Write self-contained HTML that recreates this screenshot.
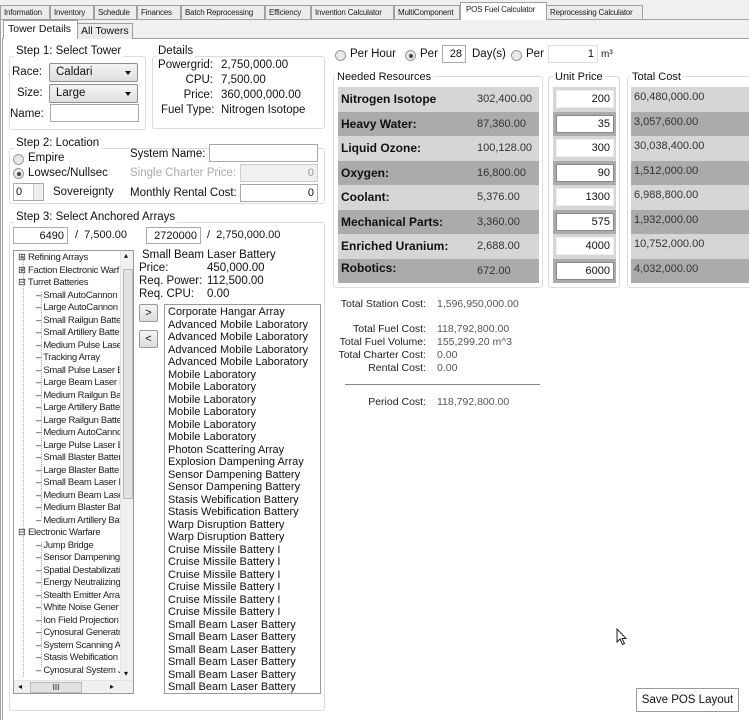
<!DOCTYPE html>
<html><head><meta charset="utf-8"><style>
*{box-sizing:border-box;margin:0;padding:0}
body{width:749px;height:720px;position:relative;overflow:hidden;background:#f0f0f0;font-family:"Liberation Sans",Arial,sans-serif;font-size:11.5px;color:#111}
.a{position:absolute;white-space:nowrap}
.tab{position:absolute;top:5px;height:15px;border:1px solid #a0a0a0;border-bottom:none;background:#ececec;font-size:8px;letter-spacing:-0.2px;line-height:13px;padding-left:3px;color:#222;overflow:hidden;white-space:nowrap}
.grp{position:absolute;border:1px solid #dcdcdc;border-radius:3px}
.gt{position:absolute;background:#fff;padding:0 2px;font-size:11.5px;line-height:12px;white-space:nowrap}
.tb{position:absolute;background:#fff;border:1px solid #a9a9a9;font-size:11px;display:flex;align-items:center;justify-content:flex-end;padding-right:3px}
.combo{position:absolute;border:1px solid #8d8d8d;border-radius:2px;background:linear-gradient(#f4f4f4,#dedede);font-size:11.5px;padding-left:6px;line-height:17px}
.combo:after{content:"";position:absolute;right:6px;top:7px;border:3.5px solid transparent;border-top:4px solid #111}
.rad{position:absolute;width:11px;height:11px;border:1px solid #999;border-radius:50%;background:#e8e8e8}
.rad.on:after{content:"";position:absolute;left:2.5px;top:2.5px;width:4px;height:4px;border-radius:50%;background:#444}
.tree div{height:12.5px;line-height:12.5px;font-size:9.5px;letter-spacing:-0.3px;white-space:nowrap;color:#222}
.list div{height:12.5px;line-height:12.5px;font-size:11px;white-space:nowrap}
.row{position:absolute;height:24.5px}
.rn{position:absolute;left:3px;top:5px;font-size:12px;font-weight:bold;white-space:nowrap}
.rv{position:absolute;left:139px;top:6px;font-size:11px;color:#333;white-space:nowrap}
.L{background:#d6d6d6}.D{background:#ababab}
.sl{position:absolute;width:95px;text-align:right;font-size:10.5px;color:#222;white-space:nowrap}
.sv{position:absolute;left:437px;font-size:10.5px;color:#555;white-space:nowrap}
</style></head><body>
<div class="tab" style="left:0;width:50px">Information</div>
<div class="tab" style="left:50px;width:44px">Inventory</div>
<div class="tab" style="left:94px;width:43px">Schedule</div>
<div class="tab" style="left:137px;width:44px">Finances</div>
<div class="tab" style="left:181px;width:84px">Batch Reprocessing</div>
<div class="tab" style="left:265px;width:46px">Efficiency</div>
<div class="tab" style="left:311px;width:83px">Invention Calculator</div>
<div class="tab" style="left:394px;width:66px">MultiComponent</div>
<div class="tab" style="left:546px;width:97px">Reprocessing Calculator</div>
<div class="a" style="left:0;top:19px;width:749px;height:1px;background:#a0a0a0"></div>
<div class="tab" style="left:460px;top:2px;height:18px;width:87px;background:#fff;padding-left:5px;line-height:14px">POS Fuel Calculator</div>
<div class="a" style="left:0;top:20px;width:749px;height:700px;background:#fff;border-left:1px solid #a0a0a0"></div>
<div class="a" style="left:2px;top:38px;width:747px;height:682px;background:#fff;border-left:1px solid #a0a0a0;border-top:1px solid #a0a0a0"></div>
<div class="a" style="left:2px;top:20px;width:747px;height:18px;background:#f0f0f0"></div>
<div class="a" style="left:77px;top:23px;width:56px;height:16px;border:1px solid #a0a0a0;border-bottom:none;background:#ececec;font-size:10.5px;padding-left:3px;line-height:14px">All Towers</div>
<div class="a" style="left:3px;top:20px;width:75px;height:19px;border:1px solid #a0a0a0;border-bottom:none;background:#fff;font-size:10.5px;padding-left:4px;line-height:17px">Tower Details</div>

<div class="grp" style="left:9px;top:56px;width:137px;height:74px"></div>
<div class="gt" style="left:14px;top:45px">Step 1: Select Tower</div>
<div class="a" style="left:12px;top:66px">Race:</div>
<div class="combo" style="left:49px;top:63px;width:89px;height:19px">Caldari</div>
<div class="a" style="left:17px;top:87px">Size:</div>
<div class="combo" style="left:49px;top:84px;width:89px;height:19px">Large</div>
<div class="a" style="left:10px;top:108px">Name:</div>
<div class="tb" style="left:50px;top:104px;width:89px;height:18px"></div>

<div class="grp" style="left:152px;top:56px;width:173px;height:73px"></div>
<div class="gt" style="left:156px;top:45px">Details</div>
<div class="a" style="left:150px;top:58px;width:63px;text-align:right;line-height:15px">Powergrid:<br>CPU:<br>Price:<br></div>
<div class="a" style="left:161px;top:103px;line-height:15px">Fuel Type:</div>
<div class="a" style="left:221px;top:58px;line-height:15px">2,750,000.00<br>7,500.00<br>360,000,000.00<br>Nitrogen Isotope</div>

<div class="grp" style="left:9px;top:148px;width:316px;height:56px"></div>
<div class="gt" style="left:14px;top:137px">Step 2: Location</div>
<div class="rad" style="left:13px;top:154px"></div><div class="a" style="left:28px;top:152px">Empire</div>
<div class="rad on" style="left:13px;top:168px"></div><div class="a" style="left:28px;top:167px">Lowsec/Nullsec</div>
<div class="tb" style="left:13px;top:183px;width:31px;height:18px;justify-content:flex-start;padding-left:2px">0<span style="position:absolute;right:0;top:0;width:10px;height:16px;background:#eee;border-left:1px solid #ccc"></span></div>
<div class="a" style="left:53px;top:186px">Sovereignty</div>
<div class="a" style="left:130px;top:148px">System Name:</div>
<div class="tb" style="left:209px;top:144px;width:109px;height:18px"></div>
<div class="a" style="left:130px;top:167px;color:#aaa">Single Charter Price:</div>
<div class="tb" style="left:240px;top:164px;width:78px;height:18px;background:#f0f0f0;border-color:#ccc;color:#999">0</div>
<div class="a" style="left:130px;top:187px">Monthly Rental Cost:</div>
<div class="tb" style="left:240px;top:184px;width:78px;height:18px;color:#111">0</div>

<div class="grp" style="left:9px;top:222px;width:316px;height:489px"></div>
<div class="gt" style="left:14px;top:211px">Step 3: Select Anchored Arrays</div>
<div class="tb" style="left:13px;top:227px;width:55px;height:17px">6490</div>
<div class="a" style="left:75px;top:229px;font-size:11px">/&nbsp;&nbsp;7,500.00</div>
<div class="tb" style="left:146px;top:227px;width:55px;height:17px">2720000</div>
<div class="a" style="left:207px;top:229px;font-size:11px">/&nbsp;&nbsp;2,750,000.00</div>

<div class="a" style="left:13px;top:250px;width:121px;height:444px;border:1px solid #999;background:#fff;overflow:hidden">
<div class="a" style="left:9px;top:6px;height:420px;border-left:1px dotted #aaa"></div>
<div class="a" style="left:27px;top:41px;height:225px;border-left:1px dotted #aaa"></div>
<div class="a" style="left:27px;top:291px;height:125px;border-left:1px dotted #aaa"></div>
<div class="tree a" style="left:4px;top:1px">
<div>⊞ Refining Arrays</div><div>⊞ Faction Electronic Warf</div><div>⊟ Turret Batteries</div>
<div style="padding-left:18px">– Small AutoCannon</div><div style="padding-left:18px">– Large AutoCannon</div><div style="padding-left:18px">– Small Railgun Batte</div><div style="padding-left:18px">– Small Artillery Batter</div><div style="padding-left:18px">– Medium Pulse Lase</div><div style="padding-left:18px">– Tracking Array</div><div style="padding-left:18px">– Small Pulse Laser E</div><div style="padding-left:18px">– Large Beam Laser I</div><div style="padding-left:18px">– Medium Railgun Ba</div><div style="padding-left:18px">– Large Artillery Batte</div><div style="padding-left:18px">– Large Railgun Batte</div><div style="padding-left:18px">– Medium AutoCanno</div><div style="padding-left:18px">– Large Pulse Laser E</div><div style="padding-left:18px">– Small Blaster Batter</div><div style="padding-left:18px">– Large Blaster Batte</div><div style="padding-left:18px">– Small Beam Laser E</div><div style="padding-left:18px">– Medium Beam Lase</div><div style="padding-left:18px">– Medium Blaster Bat</div><div style="padding-left:18px">– Medium Artillery Bat</div>
<div>⊟ Electronic Warfare</div>
<div style="padding-left:18px">– Jump Bridge</div><div style="padding-left:18px">– Sensor Dampening</div><div style="padding-left:18px">– Spatial Destabilizati</div><div style="padding-left:18px">– Energy Neutralizing</div><div style="padding-left:18px">– Stealth Emitter Arra</div><div style="padding-left:18px">– White Noise Gener</div><div style="padding-left:18px">– Ion Field Projection</div><div style="padding-left:18px">– Cynosural Generato</div><div style="padding-left:18px">– System Scanning A</div><div style="padding-left:18px">– Stasis Webification</div><div style="padding-left:18px">– Cynosural System J</div>
</div>
<div class="a" style="left:106px;top:0;width:14px;height:429px;background:#f0f0f0;border-left:1px solid #e4e4e4"><div class="a" style="left:2px;top:18px;width:10px;height:230px;background:#e2e2e2;border:1px solid #bbb"></div><div class="a" style="left:3px;top:0;font-size:8px">▴</div><div class="a" style="left:3px;top:418px;font-size:8px">▾</div></div>
<div class="a" style="left:0;top:429px;width:120px;height:14px;background:#f0f0f0;border-top:1px solid #e4e4e4"><div class="a" style="left:16px;top:1px;width:52px;height:11px;background:#e2e2e2;border:1px solid #bbb;font-size:8px;text-align:center;line-height:9px">III</div><div class="a" style="left:4px;top:1px;font-size:8px">◂</div><div class="a" style="left:96px;top:1px;font-size:8px">▸</div></div>
</div>

<div class="a" style="left:142px;top:249px">Small Beam Laser Battery</div>
<div class="a" style="left:139px;top:262px;line-height:13px">Price:<br>Req. Power:<br>Req. CPU:</div>
<div class="a" style="left:207px;top:262px;line-height:13px">450,000.00<br>112,500.00<br>0.00</div>
<div class="a" style="left:139px;top:304px;width:19px;height:18px;border:1px solid #999;border-radius:2px;background:linear-gradient(#f4f4f4,#dcdcdc);text-align:center;line-height:16px;font-size:11px">&gt;</div>
<div class="a" style="left:139px;top:330px;width:19px;height:18px;border:1px solid #999;border-radius:2px;background:linear-gradient(#f4f4f4,#dcdcdc);text-align:center;line-height:16px;font-size:11px">&lt;</div>
<div class="a list" style="left:164px;top:304px;width:157px;height:390px;border:1px solid #999;background:#fff;padding:1px 0 0 3px;overflow:hidden">
<div>Corporate Hangar Array</div><div>Advanced Mobile Laboratory</div><div>Advanced Mobile Laboratory</div><div>Advanced Mobile Laboratory</div><div>Advanced Mobile Laboratory</div><div>Mobile Laboratory</div><div>Mobile Laboratory</div><div>Mobile Laboratory</div><div>Mobile Laboratory</div><div>Mobile Laboratory</div><div>Mobile Laboratory</div><div>Photon Scattering Array</div><div>Explosion Dampening Array</div><div>Sensor Dampening Battery</div><div>Sensor Dampening Battery</div><div>Stasis Webification Battery</div><div>Stasis Webification Battery</div><div>Warp Disruption Battery</div><div>Warp Disruption Battery</div><div>Cruise Missile Battery I</div><div>Cruise Missile Battery I</div><div>Cruise Missile Battery I</div><div>Cruise Missile Battery I</div><div>Cruise Missile Battery I</div><div>Cruise Missile Battery I</div><div>Small Beam Laser Battery</div><div>Small Beam Laser Battery</div><div>Small Beam Laser Battery</div><div>Small Beam Laser Battery</div><div>Small Beam Laser Battery</div><div>Small Beam Laser Battery</div>
</div>

<div class="rad" style="left:335px;top:50px"></div><div class="a" style="left:350px;top:48px">Per Hour</div>
<div class="rad on" style="left:405px;top:50px"></div><div class="a" style="left:420px;top:48px">Per</div>
<div class="tb" style="left:442px;top:45px;width:24px;height:18px">28</div>
<div class="a" style="left:472px;top:48px">Day(s)</div>
<div class="rad" style="left:511px;top:50px"></div><div class="a" style="left:526px;top:48px">Per</div>
<div class="tb" style="left:548px;top:45px;width:50px;height:18px;border-color:#ddd">1</div>
<div class="a" style="left:601px;top:49px;font-size:10px">m³</div>

<div class="grp" style="left:333px;top:76px;width:210px;height:212px"></div>
<div class="gt" style="left:335px;top:71px;font-size:11px">Needed Resources</div>
<div class="grp" style="left:548px;top:76px;width:72px;height:212px"></div>
<div class="gt" style="left:553px;top:71px;font-size:11px">Unit Price</div>
<div class="grp" style="left:627px;top:76px;width:130px;height:212px"></div>
<div class="gt" style="left:630px;top:71px;font-size:11px">Total Cost</div>

<div class="a" style="left:338px;top:87px;width:201px">
<div class="row L" style="top:0;width:201px"><span class="rn">Nitrogen Isotope</span><span class="rv">302,400.00</span></div>
<div class="row D" style="top:24.5px;width:201px"><span class="rn">Heavy Water:</span><span class="rv">87,360.00</span></div>
<div class="row L" style="top:49px;width:201px"><span class="rn">Liquid Ozone:</span><span class="rv">100,128.00</span></div>
<div class="row D" style="top:73.5px;width:201px"><span class="rn">Oxygen:</span><span class="rv">16,800.00</span></div>
<div class="row L" style="top:98px;width:201px"><span class="rn">Coolant:</span><span class="rv">5,376.00</span></div>
<div class="row D" style="top:122.5px;width:201px"><span class="rn">Mechanical Parts:</span><span class="rv">3,360.00</span></div>
<div class="row L" style="top:147px;width:201px"><span class="rn">Enriched Uranium:</span><span class="rv">2,688.00</span></div>
<div class="row D" style="top:171.5px;width:201px;height:24.5px"><span class="rn" style="top:2px">Robotics:</span><span class="rv">672.00</span></div>
</div>
<div class="a" style="left:553px;top:87px;width:63px">
<div class="row L" style="top:0;width:63px"></div><div class="row D" style="top:24.5px;width:63px"></div><div class="row L" style="top:49px;width:63px"></div><div class="row D" style="top:73.5px;width:63px"></div><div class="row L" style="top:98px;width:63px"></div><div class="row D" style="top:122.5px;width:63px"></div><div class="row L" style="top:147px;width:63px"></div><div class="row D" style="top:171.5px;width:63px"></div>
<div class="tb" style="left:3px;top:3px;width:58px;height:18px;border-color:#eee">200</div>
<div class="tb" style="left:3px;top:27.5px;width:58px;height:18px;border-color:#888">35</div>
<div class="tb" style="left:3px;top:52px;width:58px;height:18px;border-color:#eee">300</div>
<div class="tb" style="left:3px;top:76.5px;width:58px;height:18px;border-color:#888">90</div>
<div class="tb" style="left:3px;top:101px;width:58px;height:18px;border-color:#eee">1300</div>
<div class="tb" style="left:3px;top:125.5px;width:58px;height:18px;border-color:#888">575</div>
<div class="tb" style="left:3px;top:150px;width:58px;height:18px;border-color:#eee">4000</div>
<div class="tb" style="left:3px;top:174.5px;width:58px;height:18px;border-color:#888">6000</div>
</div>
<div class="a" style="left:631px;top:87px;width:118px">
<div class="row L" style="top:0;width:118px"><span class="rv" style="left:3px;top:4px">60,480,000.00</span></div>
<div class="row D" style="top:24.5px;width:118px"><span class="rv" style="left:3px;top:4px">3,057,600.00</span></div>
<div class="row L" style="top:49px;width:118px"><span class="rv" style="left:3px;top:4px">30,038,400.00</span></div>
<div class="row D" style="top:73.5px;width:118px"><span class="rv" style="left:3px;top:4px">1,512,000.00</span></div>
<div class="row L" style="top:98px;width:118px"><span class="rv" style="left:3px;top:4px">6,988,800.00</span></div>
<div class="row D" style="top:122.5px;width:118px"><span class="rv" style="left:3px;top:4px">1,932,000.00</span></div>
<div class="row L" style="top:147px;width:118px"><span class="rv" style="left:3px;top:4px">10,752,000.00</span></div>
<div class="row D" style="top:171.5px;width:118px"><span class="rv" style="left:3px;top:4px">4,032,000.00</span></div>
</div>

<div class="sl" style="left:331px;top:298px">Total Station Cost:</div><div class="sv" style="top:298px">1,596,950,000.00</div>
<div class="sl" style="left:331px;top:323px">Total Fuel Cost:</div><div class="sv" style="top:323px">118,792,800.00</div>
<div class="sl" style="left:331px;top:336px">Total Fuel Volume:</div><div class="sv" style="top:336px">155,299.20 m^3</div>
<div class="sl" style="left:331px;top:349px">Total Charter Cost:</div><div class="sv" style="top:349px">0.00</div>
<div class="sl" style="left:331px;top:362px">Rental Cost:</div><div class="sv" style="top:362px">0.00</div>
<div class="a" style="left:345px;top:384px;width:195px;height:1px;background:#888"></div>
<div class="sl" style="left:331px;top:396px">Period Cost:</div><div class="sv" style="top:396px">118,792,800.00</div>

<svg class="a" style="left:616px;top:628px" width="12" height="18" viewBox="0 0 12 18"><path d="M1 1 L1 14 L4 11 L6.5 16.5 L8.5 15.5 L6 10.5 L10 10.5 Z" fill="#fff" stroke="#222" stroke-width="1"/></svg>
<div class="a" style="left:636px;top:688px;width:103px;height:24px;border:1px solid #999;background:#fff;text-align:center;line-height:22px;font-size:11.5px">Save POS Layout</div>
</body></html>
